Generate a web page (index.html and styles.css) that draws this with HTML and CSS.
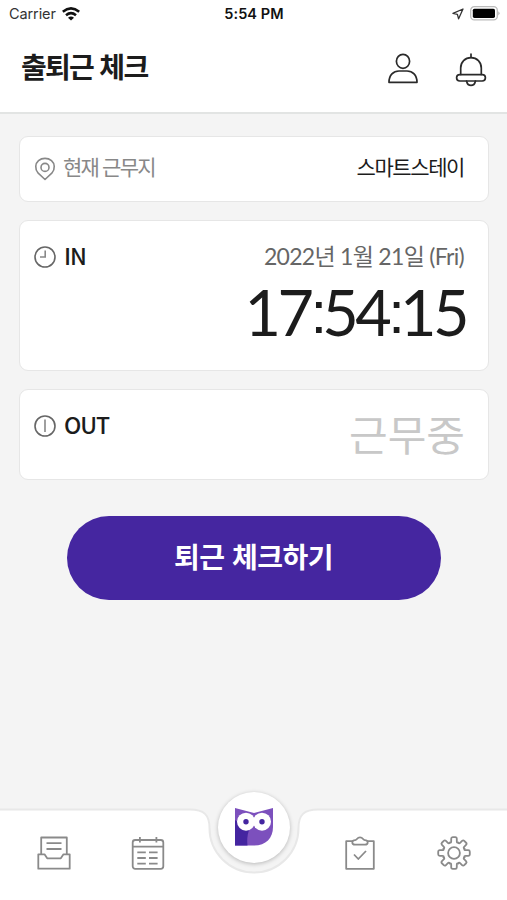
FILE: index.html
```
<!DOCTYPE html>
<html lang="ko">
<head>
    <meta charset="UTF-8">
    <meta name="viewport" content="width=device-width, initial-scale=1">
    <title>출퇴근 체크</title>
    <link rel="stylesheet" href="styles.css">
</head>
<body>
<div class="app">
    <div class="status-bar">
        <div class="carrier">
            <span>Carrier</span>
            <svg width="18" height="14" viewBox="0 0 18 14" fill="none" stroke="#111" stroke-width="2.6">
                <path d="M.8 4.700Q9-2 17.200 4.700"/>
                <path d="M4 8.200Q9 4.100 14 8.200"/>
                <path d="M9 13.600L6 10.700Q9 8.400 12 10.700Z" fill="#111" stroke="none"/>
            </svg>
        </div>
        <div class="clock">5:54 PM</div>
        <div class="indicators">
            <svg width="12" height="12" viewBox="0 0 12 12" fill="none" stroke="#333" stroke-width="1.3" stroke-linejoin="round">
                <path d="M11 1L1 5.400L5.400 6.300L6.600 10.800Z"/>
            </svg>
            <svg width="30" height="15" viewBox="0 0 30 15">
                <rect x=".7" y=".7" width="26.600" height="13.200" rx="3.600" fill="#fff" stroke="#bbb" stroke-width="1.300"/>
                <rect x="2.800" y="2.700" width="22.200" height="9.200" rx="1.600" fill="#000"/>
                <path d="M28.400 5.200Q30.600 7.300 28.400 9.400Z" fill="#aaa"/>
            </svg>
        </div>
    </div>

    <header class="header">
        <h1>출퇴근 체크</h1>
        <div class="header-icons">
            <svg width="30" height="32" viewBox="0 0 30 32" fill="none" stroke="#2a2a2a" stroke-width="1.700" stroke-linejoin="round">
                <ellipse cx="15" cy="8.300" rx="6.600" ry="7"/>
                <path d="M1 29.300C1 22 5.500 18 11 18H19C24.500 18 29 22 29 29.300Z"/>
            </svg>
            <svg width="32" height="34" viewBox="0 0 32 34" fill="none" stroke="#2a2a2a" stroke-width="1.700" stroke-linecap="round">
                <path d="M16 1V4.500"/>
                <path d="M5.700 21.500V15C5.700 9 10 4.700 16 4.700S26.300 9 26.300 15V21.500"/>
                <rect x="1.600" y="21.600" width="28.800" height="6.400" rx="3.200"/>
                <path d="M11.600 28.200Q12.500 32.400 16 32.400T20.400 28.200"/>
            </svg>
        </div>
    </header>

    <main class="content">
        <section class="card place">
            <div class="label muted">
                <svg width="22" height="24" viewBox="0 0 22 24" fill="none" stroke="#888" stroke-width="1.600" stroke-linejoin="round">
                    <path d="M11 22.500L4.200 16.200C.4 11.800 1.400 6.300 4.500 3.600C8.200 .6 13.800 .6 17.500 3.600C20.600 6.300 21.600 11.800 17.800 16.200Z"/>
                    <circle cx="11" cy="10.400" r="4"/>
                </svg>
                <span>현재 근무지</span>
            </div>
            <div class="place-name">스마트스테이</div>
        </section>

        <section class="card in">
            <div class="label">
                <svg width="22" height="22" viewBox="0 0 22 22" fill="none" stroke="#666" stroke-width="1.600">
                    <circle cx="11" cy="11" r="10"/>
                    <path d="M11.200 4.500V11H6" stroke="#888"/>
                </svg>
                <span>IN</span>
            </div>
            <div class="record">
                <div class="date">2022년 1월 21일 (Fri)</div>
                <div class="time">17<span class="colon">:</span>54<span class="colon">:</span>15</div>
            </div>
        </section>

        <section class="card out">
            <div class="label">
                <svg width="22" height="22" viewBox="0 0 22 22" fill="none" stroke="#666" stroke-width="1.600">
                    <circle cx="11" cy="11" r="10"/>
                    <path d="M11 4.500V17" stroke="#888"/>
                </svg>
                <span>OUT</span>
            </div>
            <div class="working">근무중</div>
        </section>

        <button class="check-btn" type="button">퇴근 체크하기</button>
    </main>

    <nav class="tabs">
        <svg class="tabs-bg" width="507" height="96" viewBox="0 0 507 96">
            <path d="M-2 5.500H190C204 5.500 209.500 11 209.500 24A44.500 44.500 0 0 0 298.500 24C298.500 11 304 5.500 318 5.500H509V98H-2Z" fill="#fff" stroke="#e8e8e8" stroke-width="2"/>
        </svg>
        <a class="tab">
            <svg width="34" height="34" viewBox="0 0 34 34" fill="none" stroke="#8a8a8a" stroke-width="1.800" stroke-linejoin="round">
                <path d="M4.200 18V1.500H29.800V18"/>
                <path d="M9.500 7.200H24.500M9.500 13H24.500"/>
                <path d="M1.300 18.300H7.500L10.200 22.300H23.800L26.500 18.300H32.700V32.700H1.300Z"/>
            </svg>
        </a>
        <a class="tab">
            <svg width="34" height="34" viewBox="0 0 34 34" fill="none" stroke="#8a8a8a" stroke-width="1.800">
                <rect x="1.700" y="4" width="30.600" height="28.800" rx="2.500"/>
                <path d="M1.700 10.700H32.300M8.900 1V6.500M25.400 1V6.500"/>
                <path d="M6.300 16.300H14.800M18 16.300H26.600M6.300 22H14.800M18 22H26.600M6.300 27.700H14.800M18 27.700H26.600"/>
            </svg>
        </a>
        <a class="tab home">
            <svg width="38" height="38" viewBox="0 0 38 38">
                <path d="M0 0L19 5L38 0V19C38 30 31 37.500 19 37.500H0Z" fill="#7c50bd"/>
                <path d="M0 12L14 22C12 28 12 33 12.500 37.500H0Z" fill="#4425a0"/>
                <circle cx="11" cy="13.700" r="9" fill="#fff"/>
                <circle cx="27" cy="13.700" r="9" fill="#fff"/>
                <circle cx="11" cy="13.700" r="2.700" fill="#4425a0"/>
                <circle cx="27" cy="13.700" r="2.700" fill="#4425a0"/>
            </svg>
        </a>
        <a class="tab">
            <svg width="30" height="34" viewBox="0 0 30 34" fill="none" stroke="#8a8a8a" stroke-width="1.800" stroke-linejoin="round">
                <path d="M8 5.200H1.200V32.800H28.800V5.200H22"/>
                <path d="M10 8.700C6.200 8.700 6.600 4.200 10.300 4.200C12 4.200 12 1.300 15 1.300S18 4.200 19.700 4.200C23.400 4.200 23.800 8.700 20 8.700Z"/>
                <path d="M9 18.500L13.300 23L21 15"/>
            </svg>
        </a>
        <a class="tab">
            <svg width="34" height="34" viewBox="-17 -17 34 34" fill="none" stroke="#8a8a8a" stroke-width="1.800" stroke-linecap="round">
                <defs>
                    <path id="tooth" d="M-4.320-10.440Q-2.800-9.900-2.800-11.800V-14.200Q-2.800-15.800-1.300-15.800H1.300Q2.800-15.800 2.800-14.200V-11.800Q2.800-9.900 4.320-10.440"/>
                </defs>
                <use href="#tooth"/>
                <use href="#tooth" transform="rotate(45)"/>
                <use href="#tooth" transform="rotate(90)"/>
                <use href="#tooth" transform="rotate(135)"/>
                <use href="#tooth" transform="rotate(180)"/>
                <use href="#tooth" transform="rotate(225)"/>
                <use href="#tooth" transform="rotate(270)"/>
                <use href="#tooth" transform="rotate(315)"/>
                <circle r="5.900"/>
            </svg>
        </a>
    </nav>
</div>
</body>
</html>
```
FILE: styles.css
```
* {
    box-sizing: border-box;
}
body {
    margin: 0;
    background: #f4f4f4;
    color: #1c1c1c;
    font-family: Lato, "Noto Sans CJK KR", sans-serif;
}
svg {
    display: block;
    flex: none;
}
.app {
    width: 507px;
    height: 900px;
    display: flex;
    flex-direction: column;
    overflow: hidden;
}

/* status bar */
.status-bar {
    display: grid;
    grid-template-columns: 1fr auto 1fr;
    align-items: center;
    height: 27px;
    padding: 0 7px 0 9px;
    background: #fff;
    font: 14.5px/27px Inter, sans-serif;
}
.carrier {
    display: flex;
    align-items: center;
    gap: 6px;
    color: #333;
}
.carrier span {
    letter-spacing: -0.1px;
}
.clock {
    font-weight: 600;
    letter-spacing: 0.1px;
    margin-right: 1px;
    color: #111;
}
.indicators {
    display: flex;
    align-items: center;
    justify-content: flex-end;
    gap: 6px;
}

/* header */
.header {
    display: flex;
    justify-content: space-between;
    height: 87px;
    padding: 23px 20px 0 21px;
    background: #fff;
    border-bottom: 2px solid #e2e4e3;
}
.header h1 {
    margin: 0;
    font: bold 28px/32px "Noto Sans CJK KR", sans-serif;
    letter-spacing: -1.7px;
}
.header-icons {
    display: flex;
    gap: 37px;
    padding-top: 3px;
}

/* cards */
.content {
    flex: 1;
    display: flex;
    flex-direction: column;
    gap: 18px;
    padding: 22px 18px 0 19px;
}
.card {
    display: flex;
    justify-content: space-between;
    padding: 0 23px 0 14px;
    background: #fff;
    border: 1px solid #e6e6e6;
    border-radius: 9px;
}
.label {
    display: flex;
    align-items: center;
    align-self: flex-start;
    gap: 8px;
    height: 30px;
    font: 500 23px/30px "Noto Sans CJK KR", sans-serif;
    letter-spacing: -1.1px;
}
.label span {
    padding-bottom: 4px;
}
.muted {
    color: #888;
    font-size: 21px;
    font-weight: 400;
    letter-spacing: -1.8px;
}
.muted svg {
    margin: 1px -1px 0 0;
}
.place {
    height: 66px;
    padding-top: 16px;
}
.place-name {
    font: 21px/26px "Noto Sans CJK KR", sans-serif;
    letter-spacing: -1.4px;
    margin-right: 1px;
}
.in {
    height: 151px;
    padding-top: 21px;
}
.record {
    text-align: right;
}
.date {
    font-size: 23px;
    line-height: 28px;
    letter-spacing: -0.7px;
    margin-right: 1px;
    color: #666;
}
.time {
    font-size: 63px;
    line-height: 72px;
    letter-spacing: -3.5px;
    margin: 6px -1px 0 0;
}
.colon {
    position: relative;
    top: -3px;
    font: 60px/1 "Liberation Sans", sans-serif;
    letter-spacing: -5px;
}
.out {
    height: 91px;
    padding-top: 22px;
}
.out .label {
    margin-top: -1px;
}
.working {
    font: 400 42px/42px "Noto Sans CJK KR", sans-serif;
    color: #c8c8c8;
}
.check-btn {
    align-self: center;
    width: 374px;
    height: 84px;
    margin-top: 18px;
    padding: 0 1px 4px 0;
    border: 0;
    border-radius: 42px;
    background: #4526a0;
    color: #fff;
    font: bold 28px/32px "Noto Sans CJK KR", sans-serif;
    letter-spacing: -0.5px;
}

/* bottom tabs */
.tabs {
    position: relative;
    display: grid;
    grid-template-columns: 108px 80px 132px 80px 107px;
    height: 96px;
}
.tabs-bg {
    position: absolute;
    left: 0;
    top: 0;
}
.tab {
    position: relative;
    display: flex;
    justify-content: center;
    align-items: flex-start;
    padding-top: 32px;
}
.home {
    width: 72px;
    height: 71px;
    margin-top: -12px;
    padding: 0 0 1px;
    align-items: center;
    justify-self: center;
    border-radius: 50%;
    background: #fff;
    box-shadow: 0 1px 4px rgba(0, 0, 0, .25);
}
```
